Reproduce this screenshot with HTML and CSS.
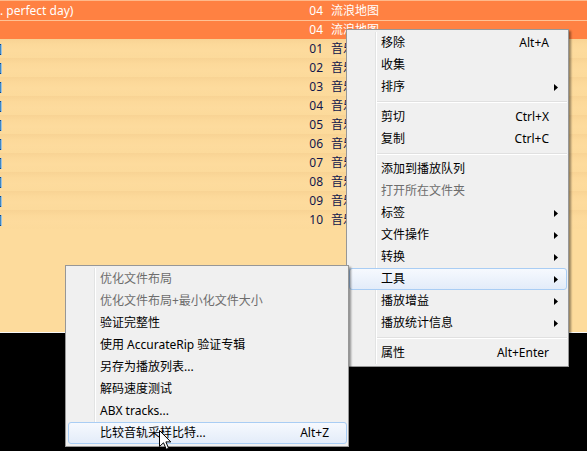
FILE: index.html
```html
<!DOCTYPE html>
<html>
<head>
<meta charset="utf-8">
<link rel="stylesheet" href="styles.css">
</head>
<body>
<div class="screen">
  <div class="playlist">
    <div class="row sel"><span class="artist">. perfect day)</span><span class="num">04</span><span class="title">流浪地图</span></div>
    <div class="row sel divided"><span class="artist"></span><span class="num">04</span><span class="title">流浪地图</span></div>
    <div class="row"><span class="artist"><i class="cut"></i></span><span class="num">01</span><span class="title">音乐片段</span></div>
    <div class="row"><span class="artist"><i class="cut"></i></span><span class="num">02</span><span class="title">音乐片段</span></div>
    <div class="row"><span class="artist"><i class="cut"></i></span><span class="num">03</span><span class="title">音乐片段</span></div>
    <div class="row"><span class="artist"><i class="cut"></i></span><span class="num">04</span><span class="title">音乐片段</span></div>
    <div class="row"><span class="artist"><i class="cut"></i></span><span class="num">05</span><span class="title">音乐片段</span></div>
    <div class="row"><span class="artist"><i class="cut"></i></span><span class="num">06</span><span class="title">音乐片段</span></div>
    <div class="row"><span class="artist"><i class="cut"></i></span><span class="num">07</span><span class="title">音乐片段</span></div>
    <div class="row"><span class="artist"><i class="cut"></i></span><span class="num">08</span><span class="title">音乐片段</span></div>
    <div class="row"><span class="artist"><i class="cut"></i></span><span class="num">09</span><span class="title">音乐片段</span></div>
    <div class="row"><span class="artist"><i class="cut"></i></span><span class="num">10</span><span class="title">音乐片段</span></div>
  </div>

  <div class="menu main-menu">
    <div class="item"><span>移除</span><span class="key">Alt+A</span></div>
    <div class="item"><span>收集</span></div>
    <div class="item sub"><span>排序</span><svg class="arrow" width="4" height="7" viewBox="0 0 4 7"><polygon points="0,0 4,3.5 0,7"/></svg></div>
    <div class="sep"></div>
    <div class="item"><span>剪切</span><span class="key">Ctrl+X</span></div>
    <div class="item"><span>复制</span><span class="key">Ctrl+C</span></div>
    <div class="sep"></div>
    <div class="item"><span>添加到播放队列</span></div>
    <div class="item off"><span>打开所在文件夹</span></div>
    <div class="item sub"><span>标签</span><svg class="arrow" width="4" height="7" viewBox="0 0 4 7"><polygon points="0,0 4,3.5 0,7"/></svg></div>
    <div class="item sub"><span>文件操作</span><svg class="arrow" width="4" height="7" viewBox="0 0 4 7"><polygon points="0,0 4,3.5 0,7"/></svg></div>
    <div class="item sub"><span>转换</span><svg class="arrow" width="4" height="7" viewBox="0 0 4 7"><polygon points="0,0 4,3.5 0,7"/></svg></div>
    <div class="item sub hot"><span>工具</span><svg class="arrow" width="4" height="7" viewBox="0 0 4 7"><polygon points="0,0 4,3.5 0,7"/></svg></div>
    <div class="item sub"><span>播放增益</span><svg class="arrow" width="4" height="7" viewBox="0 0 4 7"><polygon points="0,0 4,3.5 0,7"/></svg></div>
    <div class="item sub"><span>播放统计信息</span><svg class="arrow" width="4" height="7" viewBox="0 0 4 7"><polygon points="0,0 4,3.5 0,7"/></svg></div>
    <div class="sep"></div>
    <div class="item"><span>属性</span><span class="key">Alt+Enter</span></div>
  </div>

  <div class="menu tools-menu">
    <div class="item off"><span>优化文件布局</span></div>
    <div class="item off"><span>优化文件布局+最小化文件大小</span></div>
    <div class="item"><span>验证完整性</span></div>
    <div class="item"><span>使用 AccurateRip 验证专辑</span></div>
    <div class="item"><span>另存为播放列表...</span></div>
    <div class="item"><span>解码速度测试</span></div>
    <div class="item"><span>ABX tracks...</span></div>
    <div class="item hot"><span>比较音轨采样比特...</span><span class="key">Alt+Z</span></div>
  </div>

  <svg class="cursor" width="13" height="21" viewBox="0 0 13 21"><path d="M0.5 0.5 L0.5 16.5 L4.5 12.8 L7.3 19.3 L9.6 18.3 L6.9 11.9 L11.8 11.9 Z" fill="#fff" stroke="#000" stroke-width="1" stroke-linejoin="miter"/></svg>
</div>
</body>
</html>
```

FILE: styles.css
```css
html, body {
  margin: 0;
  padding: 0;
  background: #000;
}

.screen {
  position: relative;
  width: 587px;
  height: 451px;
  overflow: hidden;
  background: #000;
  font-family: "Noto Sans", "Noto Sans CJK SC", sans-serif;
  font-size: 12px;
}

.playlist {
  height: 331px;
  border-top: 1px solid #ffb98a;
  border-bottom: 1px solid #f6f6f6;
  background: #fddb9c;
  box-sizing: content-box;
}

.row {
  display: grid;
  grid-template-columns: 300px 23px 1fr;
  height: 19px;
  line-height: 19px;
  color: #10164c;
  white-space: nowrap;
  overflow: hidden;
  background: linear-gradient(#f8d394 0%, #fcd99a 30%, #fddb9d 60%, #fcda9b 100%);
  box-sizing: border-box;
}

.row.sel {
  background: #ff8142;
  color: #fff;
}

.row.divided {
  border-top: 1px solid #ffc294;
  line-height: 17px;
}

.artist {
  overflow: hidden;
  position: relative;
}

.num {
  text-align: right;
}

.title {
  padding-left: 8px;
}

.cut {
  position: absolute;
  left: 0;
  top: 5px;
  width: 1px;
  height: 9px;
  background: #3f87c4;
  border-top: 1px solid #17467f;
  border-bottom: 1px solid #17467f;
  box-shadow: 1px 0 0 #9cc1dc;
}

.menu {
  position: absolute;
  box-sizing: border-box;
  background: #f0f0f0;
  border: 1px solid #979797;
  padding: 2px 1px 2px 2px;
  box-shadow: 2px 2px 2px rgba(0, 0, 0, 0.4);
  color: #000;
}

.menu::before {
  content: "";
  position: absolute;
  top: 2px;
  bottom: 2px;
  left: 28px;
  width: 1px;
  background: #e2e3e3;
  box-shadow: 1px 0 0 #fff;
}

.main-menu {
  left: 346px;
  top: 29px;
  width: 223px;
  z-index: 2;
}

.tools-menu {
  left: 65px;
  top: 265px;
  width: 284px;
  z-index: 3;
}

.item {
  position: relative;
  z-index: 1;
  display: flex;
  justify-content: space-between;
  height: 22px;
  line-height: 20px;
  box-sizing: border-box;
  border: 1px solid transparent;
  border-radius: 3px;
  padding: 0 17px 0 31px;
  white-space: nowrap;
}

.item.off {
  color: #6d6d6d;
}

.item.hot {
  border-color: #a9cdf4;
  background: linear-gradient(#f6f9fe, #e3ecf9);
}

.arrow {
  position: absolute;
  right: 8px;
  top: 7px;
  fill: #000;
}

.sep {
  position: relative;
  z-index: 1;
  height: 8px;
}

.sep::after {
  content: "";
  position: absolute;
  left: 28px;
  right: 0;
  top: 3px;
  height: 1px;
  background: #e0e0e0;
  box-shadow: 0 1px 0 #fff;
}

.cursor {
  position: absolute;
  left: 159px;
  top: 430px;
  z-index: 5;
}
```
